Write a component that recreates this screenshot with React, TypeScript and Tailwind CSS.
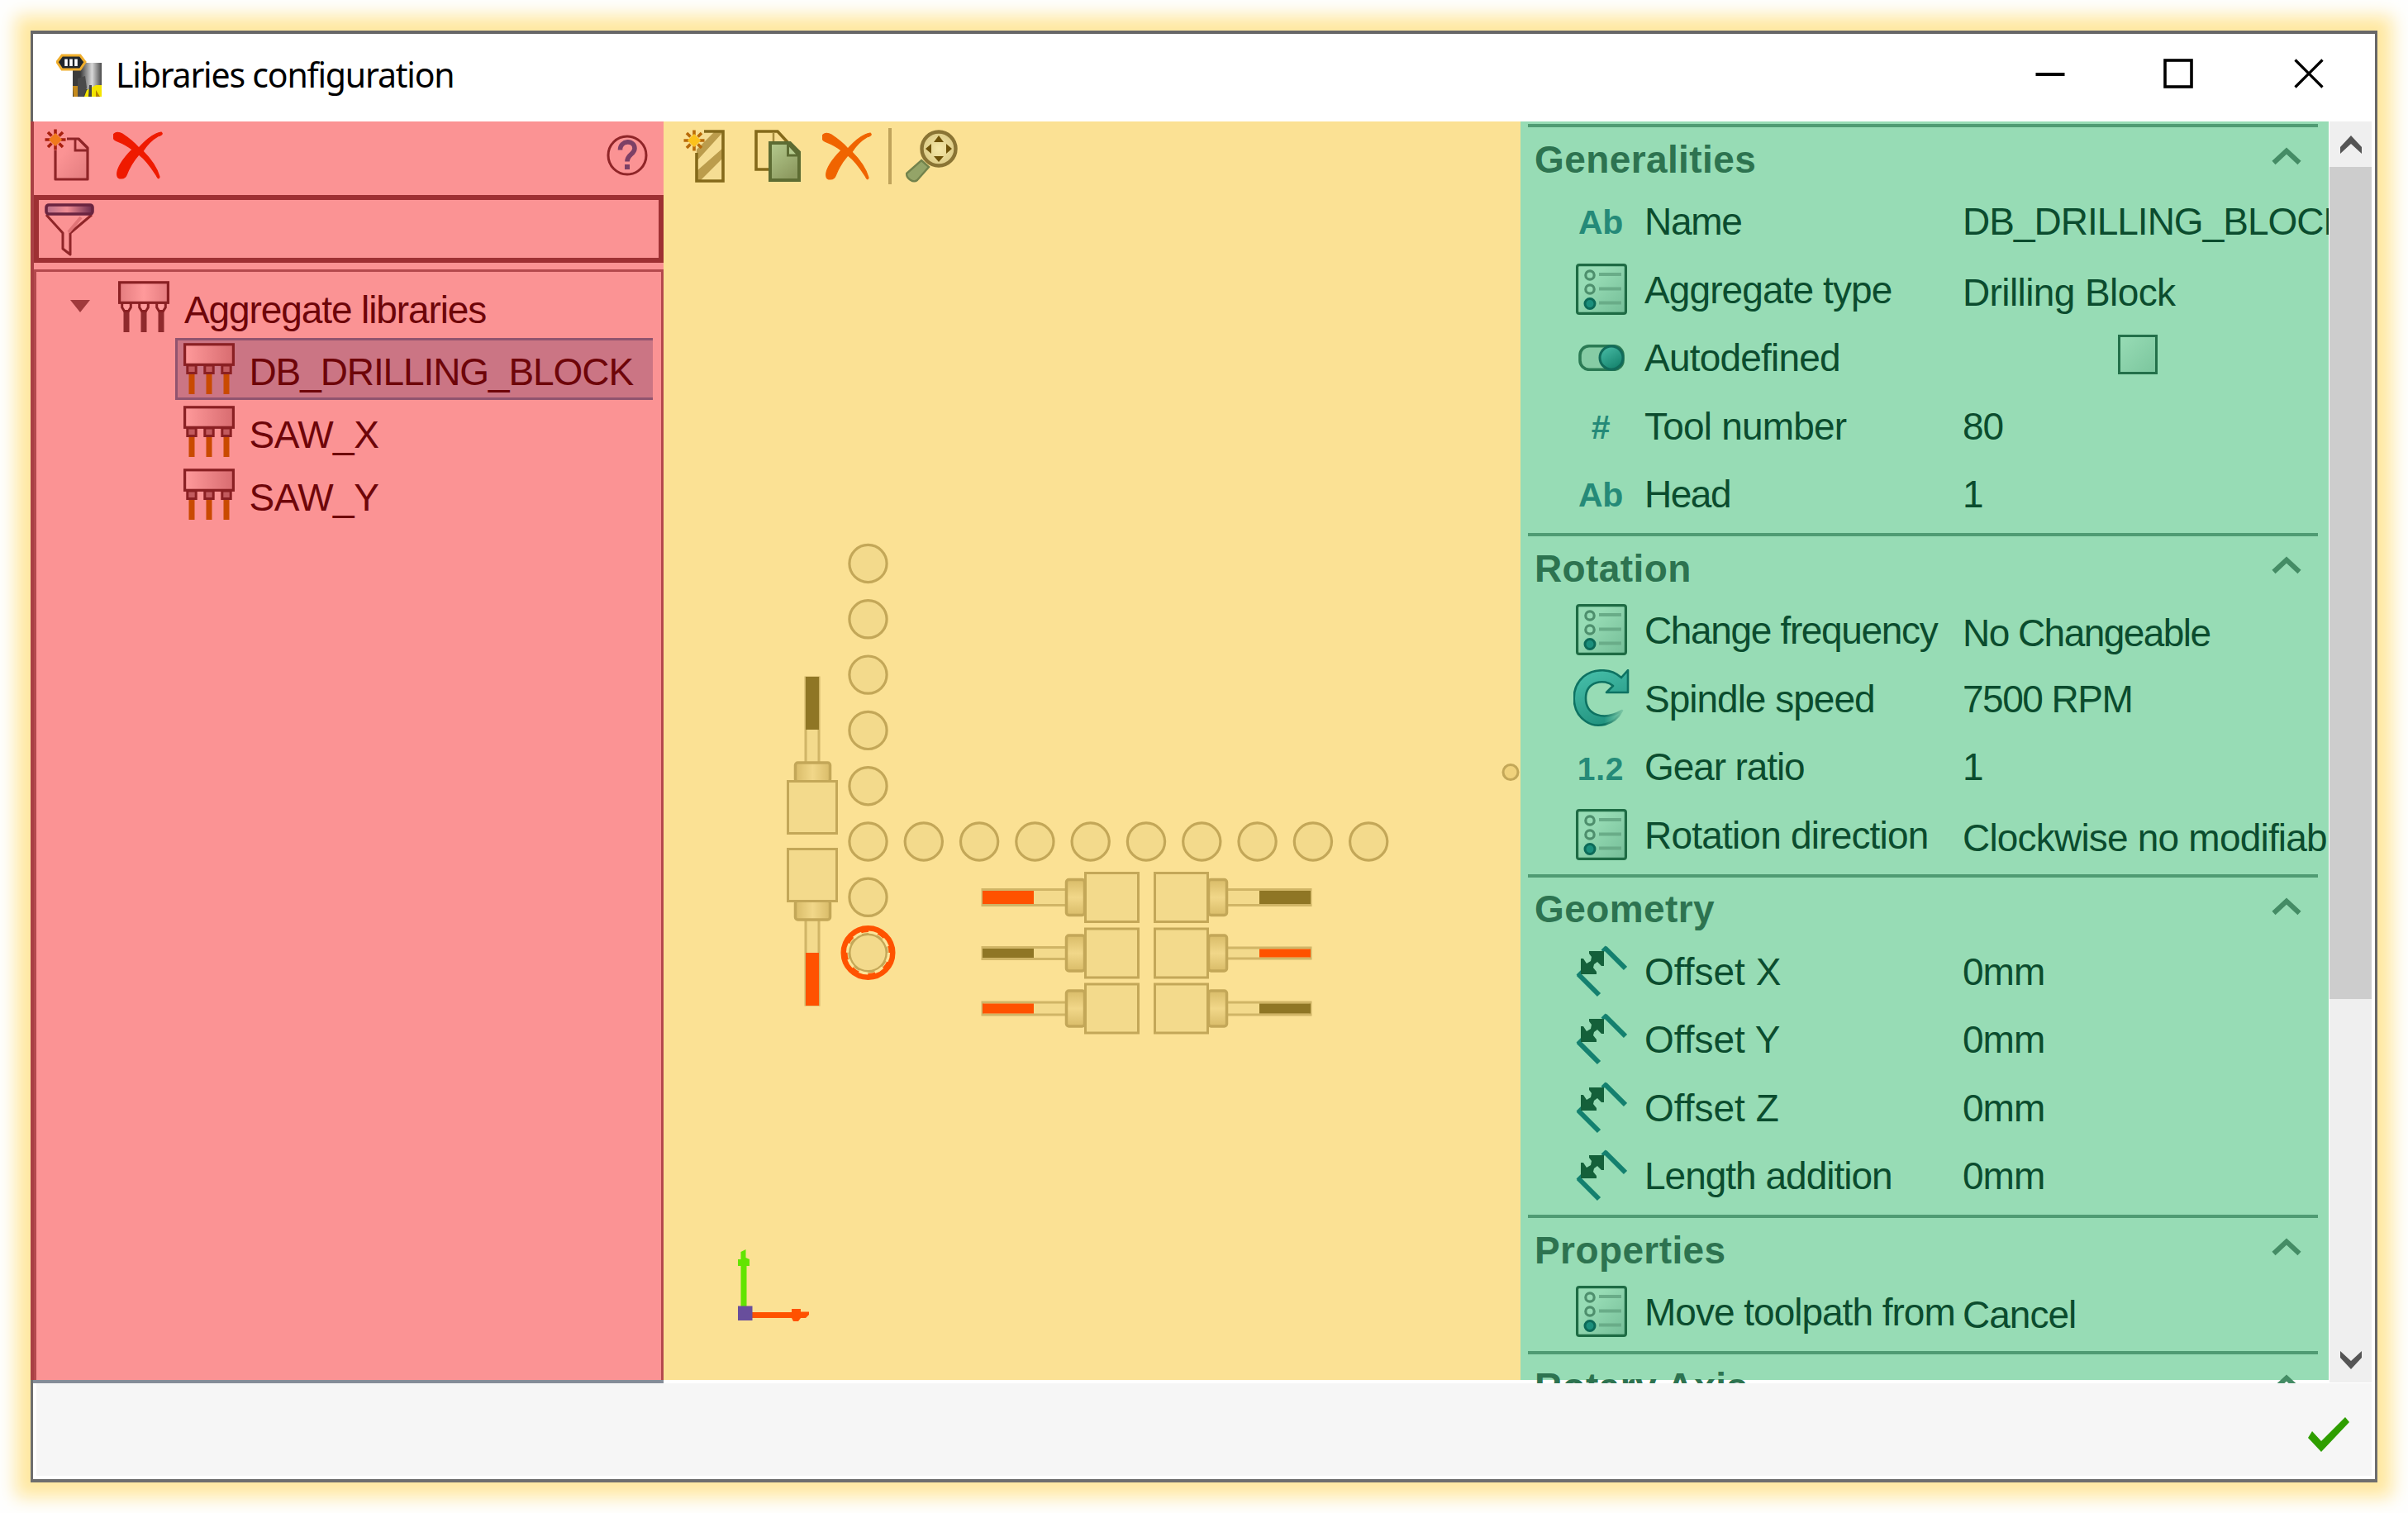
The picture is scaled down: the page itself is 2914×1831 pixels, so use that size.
import type { ReactNode } from 'react';

const agg = 'font-["Liberation_Sans",sans-serif]';

function AppIcon() {
  return (
    <svg width="56" height="54" viewBox="0 0 56 54">
      <defs>
        <linearGradient id="bit" x1="0" x2="1">
          <stop offset="0" stopColor="#3a3a3a" />
          <stop offset="0.55" stopColor="#d8d8d8" />
          <stop offset="1" stopColor="#4a4a4a" />
        </linearGradient>
      </defs>
      <rect x="20" y="16" width="18" height="36" fill="#3c3c3c" />
      <rect x="29" y="11" width="26" height="32" fill="url(#bit)" />
      <path d="M20 39h7v13h-6z" fill="#c58a1c" />
      <path d="M48 38h7v14H34l3-8z" fill="#f4e400" />
      <path d="M26 30l9-3 2 14-4 11h-7z" fill="#4a4a4a" />
      <path d="M40 38l3 0 0 14-4 0z" fill="#444" />
      <path d="M48 52l0-8 5 8z" fill="#b48300" />
      <path d="M7 2h22l6 8-6 9H7L1 10z" fill="#20262c" stroke="#efae2d" strokeWidth="3" />
      <path d="M12 6.500v8.500M18 6.500v8.500M24 6.500v8.500" stroke="#fff" strokeWidth="3.600" />
    </svg>
  );
}

function Star({ cx, cy, color, core }: { cx: number; cy: number; color: string; core: string }) {
  return (
    <g stroke={color} strokeWidth="3.600">
      <path d={`M${cx} ${cy - 12.5}v6M${cx} ${cy + 6.5}v6M${cx - 12.5} ${cy}h6M${cx + 6.5} ${cy}h6M${cx - 9} ${cy - 9}l4.500 4.500M${cx + 9} ${cy + 9}l-4.500 -4.500M${cx + 9} ${cy - 9}l-4.500 4.500M${cx - 9} ${cy + 9}l4.500 -4.500`} />
      <path d={`M${cx} ${cy - 7}l3.500 3.500 3.500 3.500-3.500 3.500-3.500 3.500-3.500-3.500-3.500-3.500 3.500-3.500z`} fill={core} stroke={core} strokeWidth="1.500" />
    </g>
  );
}

function NewFileIcon() {
  return (
    <svg width="54" height="64" viewBox="0 0 54 64">
      <defs>
        <linearGradient id="pg" x1="0" y1="0" x2="1" y2="1">
          <stop offset="0.3" stopColor="#fb9394" />
          <stop offset="1" stopColor="#e27c7e" />
        </linearGradient>
      </defs>
      <path d="M13 26v35h39V23L41 12H27" fill="url(#pg)" stroke="#8f2528" strokeWidth="3.200" strokeLinejoin="round" />
      <path d="M37 12v14h14" fill="none" stroke="#8f2528" strokeWidth="2.800" />
      <Star cx={13} cy={13} color="#a8200f" core="#f07a1c" />
    </svg>
  );
}

function CrossIcon({ color }: { color: string }) {
  return (
    <svg width="60" height="58" viewBox="0 0 60 58">
      <path d="M0 6C0 1 6 0 11 3C20 9 26 14 31 20C38 12 47 3 58 1C61 3 58 5 54 6C47 10 41 16 36 24C45 33 53 44 56 55C55 59 53 55 52 53C45 42 38 33 31 28C24 36 19 45 16 53C14 58 6 58 5 54C3 46 12 33 23 22C16 16 8 13 3 11C1 10 0 8 0 6Z" fill={color} stroke={color} strokeWidth="1.200" />
    </svg>
  );
}

function HelpIcon() {
  return (
    <svg width="50" height="50" viewBox="0 0 50 50">
      <circle cx="25" cy="25" r="23" fill="none" stroke="#8f2528" strokeWidth="3" />
      <path d="M16.500 18.500c0-12.500 17.500-12.500 17.500-2 0 7.500-9 7-9 16" fill="none" stroke="#7c4066" strokeWidth="5.600" />
      <rect x="22" y="36" width="6" height="6" fill="#7c4066" />
    </svg>
  );
}

function FunnelIcon() {
  return (
    <svg width="60" height="64" viewBox="0 0 60 64">
      <defs>
        <linearGradient id="fn" x1="0" x2="1">
          <stop offset="0" stopColor="#b8708a" />
          <stop offset="0.45" stopColor="#f08c94" />
          <stop offset="1" stopColor="#6a2a4c" />
        </linearGradient>
      </defs>
      <path d="M2 14L22 36v19l9 7V36L57 14" fill="#fb9394" stroke="#8f2528" strokeWidth="3" strokeLinejoin="round" />
      <path d="M44 17L29 35" stroke="#e07376" strokeWidth="4" />
      <rect x="2" y="2" width="56" height="11" rx="3" fill="url(#fn)" stroke="#6a2440" strokeWidth="3.600" />
    </svg>
  );
}

function BlockIcon({ root }: { root?: boolean }) {
  return (
    <svg width="62" height="62" viewBox="0 0 62 62" className="shrink-0">
      <defs>
        <linearGradient id="bk" x1="0" x2="1">
          <stop offset="0" stopColor="#ff9a9b" />
          <stop offset="1" stopColor="#d86c70" />
        </linearGradient>
        <linearGradient id="bkr" x1="0" x2="1">
          <stop offset="0" stopColor="#e47c7f" />
          <stop offset="0.5" stopColor="#ff9a9b" />
          <stop offset="1" stopColor="#e47c7f" />
        </linearGradient>
      </defs>
      {[10, 31, 52].map((x) => (
        <g key={x}>
          <rect x={x - 3.5} y="37" width="7" height="25" fill={root ? '#8f2a2d' : '#c94a00'} />
          <path
            d={root ? `M${x - 5.3} 26h10.600v6l-2.800 4.500h-5l-2.800-4.500z` : `M${x - 5.2} 27h10.400v9.500h-10.400z`}
            fill={root ? '#ff9a9b' : '#c25a5e'}
            stroke="#8a2023"
            strokeWidth="3"
          />
        </g>
      ))}
      <rect x="1.600" y="1.800" width="58.800" height="24.500" fill={root ? 'url(#bkr)' : 'url(#bk)'} stroke="#8a2023" strokeWidth="3.200" />
    </svg>
  );
}

function NewToolIcon() {
  return (
    <svg width="50" height="64" viewBox="0 0 50 64">
      <rect x="16" y="2" width="32" height="60" fill="#f5dd93" />
      <path d="M16 24L38 2h8v3L16 38zM16 50L48 22v12L20 62h-4z" fill="#bb9c4c" />
      <path d="M16 28v34h32V2H25" fill="none" stroke="#84691a" strokeWidth="3.600" />
      <Star cx={13} cy={13} color="#b86a08" core="#fcc21c" />
    </svg>
  );
}

function CopyIcon() {
  return (
    <svg width="56" height="64" viewBox="0 0 56 64">
      <defs>
        <linearGradient id="cp" x1="0" y1="0" x2="0.600" y2="1">
          <stop offset="0" stopColor="#b5cb8e" />
          <stop offset="1" stopColor="#8d9a60" />
        </linearGradient>
      </defs>
      <path d="M2 2h26l12 13v33H2z" fill="#f8dd90" stroke="#84691a" strokeWidth="3.600" />
      <path d="M23 3v13" stroke="#a78c3e" strokeWidth="2.500" />
      <path d="M19 16h24l11 11v34H19z" fill="url(#cp)" stroke="#5d6c33" strokeWidth="4" />
      <path d="M40.500 17v14h13z" fill="#b5cb8e" stroke="#5d6c33" strokeWidth="3" />
    </svg>
  );
}

function ZoomFitIcon() {
  return (
    <svg width="64" height="64" viewBox="0 0 64 64">
      <defs>
        <radialGradient id="zf">
          <stop offset="0" stopColor="#f6e8a8" />
          <stop offset="1" stopColor="#dccb86" />
        </radialGradient>
      </defs>
      <path d="M19 37l9 8L14 61c-5 4-13-2-13-8z" fill="#94a468" stroke="#72824c" strokeWidth="2.400" />
      <circle cx="40" cy="23" r="20.500" fill="url(#zf)" stroke="#8a7434" strokeWidth="4.400" />
      <path d="M40 7l6 8H34zM40 39l6-7H34zM24 23l7-6v12zM56 23l-7-6v12z" fill="#6e5208" />
    </svg>
  );
}

function ListIcon() {
  return (
    <svg width="62" height="62" viewBox="0 0 62 62" className="mt-[2px]">
      <defs>
        <linearGradient id="ls" x1="0" y1="0" x2="1" y2="1">
          <stop offset="0.300" stopColor="#97dcb5" />
          <stop offset="1" stopColor="#74bd97" />
        </linearGradient>
      </defs>
      <rect x="1.600" y="1.600" width="58.800" height="58.800" rx="2.500" fill="url(#ls)" stroke="#1e6b44" strokeWidth="3.200" />
      <path d="M28 13h27M28 30.500h27M28 47.500h27" stroke="#69ac88" strokeWidth="4" />
      <circle cx="17" cy="14" r="5.200" fill="#97dcb5" stroke="#4e8f6d" strokeWidth="3.200" />
      <circle cx="17" cy="31" r="5.200" fill="#97dcb5" stroke="#4e8f6d" strokeWidth="3.200" />
      <circle cx="17" cy="48.500" r="6" fill="#1b8f7c" stroke="#0c6a58" strokeWidth="3" />
    </svg>
  );
}

function ToggleIcon() {
  return (
    <svg width="56" height="32" viewBox="0 0 56 32" className="mt-[4px]">
      <defs>
        <linearGradient id="tg" x1="0" y1="0" x2="0.600" y2="1">
          <stop offset="0" stopColor="#4bbfa9" />
          <stop offset="1" stopColor="#17856f" />
        </linearGradient>
      </defs>
      <rect x="2" y="1.800" width="52" height="28.500" rx="11" fill="#86cca5" stroke="#2b7a54" strokeWidth="3.600" />
      <circle cx="40" cy="16" r="14" fill="url(#tg)" stroke="#116b5a" strokeWidth="3" />
    </svg>
  );
}

function RotateIcon() {
  return (
    <svg width="68" height="70" viewBox="0 0 68 70" className="mt-[2px]">
      <defs>
        <linearGradient id="rt" x1="0.300" y1="0" x2="0.700" y2="1">
          <stop offset="0" stopColor="#45bda8" />
          <stop offset="0.750" stopColor="#2a9c88" />
          <stop offset="1" stopColor="#1d8f7c" />
        </linearGradient>
        <linearGradient id="rf" x1="0" x2="1">
          <stop offset="0.550" stopColor="#fff" />
          <stop offset="0.950" stopColor="#000" />
        </linearGradient>
        <mask id="rm">
          <rect width="68" height="36" fill="#fff" />
          <rect y="36" width="68" height="34" fill="url(#rf)" />
        </mask>
      </defs>
      <path mask="url(#rm)" d="M66 1V28H40L48 20C38 11 15 14 15 35C15 55 36 63 59 50C50 68 28 72 15 63C-4 50-3 22 12 9C26-2 46-1 58 10Z" fill="url(#rt)" stroke="#0d7262" strokeWidth="2.600" strokeLinejoin="round" />
    </svg>
  );
}

function DimensionIcon() {
  return (
    <svg width="62" height="64" viewBox="0 0 62 64" className="mt-[2px]">
      <path d="M28 61L3 36M60 29L35 4" stroke="#14806f" strokeWidth="6" />
      <path d="M2 38l8-8M32 8l5-5" stroke="#14806f" strokeWidth="4" />
      <path d="M34 8v18h-3l-5-5-4 3-1 4 4 5v3H6V17h3l4 6 5-3 1-5-3-4v-3z" fill="#14603a" />
    </svg>
  );
}

function Glyph({ children, small }: { children: ReactNode; small?: boolean }) {
  return (
    <span className={(small ? 'pt-[9px] text-[39px] tracking-[0.7px] ' : 'pt-[7px] text-[41px] tracking-[-0.3px] ') + 'pr-[2px] leading-none font-bold text-[#258a78]'}>
      {children}
    </span>
  );
}

type RowData = { icon: ReactNode; label: string; value?: ReactNode; drop?: boolean; lt?: string; vt?: string };

const sections: { title: string; rows: RowData[] }[] = [
  {
    title: 'Generalities',
    rows: [
      { icon: <Glyph>Ab</Glyph>, label: 'Name', value: 'DB_DRILLING_BLOCK', lt: 'tracking-[-1.3px]', vt: 'tracking-[-1px]' },
      { icon: <ListIcon />, label: 'Aggregate type', value: 'Drilling Block', drop: true, lt: 'tracking-[-0.9px]', vt: 'tracking-[-0.6px]' },
      { icon: <ToggleIcon />, label: 'Autodefined', value: <Checkbox />, lt: 'tracking-[-0.8px]' },
      { icon: <Glyph>#</Glyph>, label: 'Tool number', value: '80', lt: 'tracking-[-0.8px]' },
      { icon: <Glyph>Ab</Glyph>, label: 'Head', value: '1', lt: 'tracking-[-1.5px]' },
    ],
  },
  {
    title: 'Rotation',
    rows: [
      { icon: <ListIcon />, label: 'Change frequency', value: 'No Changeable', drop: true, lt: 'tracking-[-1.35px]', vt: 'tracking-[-1.55px]' },
      { icon: <RotateIcon />, label: 'Spindle speed', value: '7500 RPM', vt: 'tracking-[-1.5px]' },
      { icon: <Glyph small>1.2</Glyph>, label: 'Gear ratio', value: '1', lt: 'tracking-[-1.1px]' },
      { icon: <ListIcon />, label: 'Rotation direction', value: 'Clockwise no modifiab', drop: true, lt: 'tracking-[-0.8px]', vt: 'tracking-[-0.8px]' },
    ],
  },
  {
    title: 'Geometry',
    rows: [
      { icon: <DimensionIcon />, label: 'Offset X', value: '0mm', lt: 'tracking-[0px]' },
      { icon: <DimensionIcon />, label: 'Offset Y', value: '0mm', lt: 'tracking-[0px]' },
      { icon: <DimensionIcon />, label: 'Offset Z', value: '0mm', lt: 'tracking-[0px]' },
      { icon: <DimensionIcon />, label: 'Length addition', value: '0mm' },
    ],
  },
  {
    title: 'Properties',
    rows: [{ icon: <ListIcon />, label: 'Move toolpath from', value: 'Cancel', drop: true }],
  },
  { title: 'Rotary Axis', rows: [] },
];

function Checkbox() {
  return <span className="mb-1 ml-[188px] block size-12 border-[3px] border-[#23704a] bg-linear-to-br from-[#97dcb5] to-[#7cc69e]" />;
}

function Section({ title, rows }: { title: string; rows: RowData[] }) {
  return (
    <section className="mr-[13px] ml-[9px] shrink-0 border-t-4 border-[#4f9b73] pb-[7.5px]">
      <header className="flex h-[71px] items-center justify-between pt-[5px] pr-[19px] pl-[8px]">
        <h2 className="pt-px text-[46px] leading-none font-bold tracking-[0.4px] text-[#2d7350]">{title}</h2>
        <svg width="38" height="24" viewBox="0 0 38 24" className="mb-[6px]">
          <path d="M3.500 20L19 5.500L34.500 20" fill="none" stroke="#448c65" strokeWidth="6" />
        </svg>
      </header>
      {rows.map((r) => (
        <div key={r.label} className="flex h-[82.5px] items-center">
          <span className="ml-[54px] flex w-[70px] shrink-0 items-center justify-center">{r.icon}</span>
          <span className={(r.lt ?? 'tracking-[-1px]') + ' ml-[17px] w-[385px] shrink-0 pt-[4px] text-[46px] leading-none whitespace-nowrap text-[#0b4c2e]'}>
            {r.label}
          </span>
          <span
            className={
              (r.vt ?? 'tracking-[-1px]') +
              (typeof r.value !== 'string' ? '' : r.drop ? ' pt-[10px]' : ' pt-[4px]') +
              ' text-[46px] leading-none whitespace-nowrap text-[#0b4c2e]'
            }
          >
            {r.value}
          </span>
        </div>
      ))}
    </section>
  );
}

const edge = '#c3a758';
const face = '#f3da8c';

/* A spindle drawn pointing left from its box; `flip` mirrors it. */
function SideTool({ x, y, flip, hot, half }: { x: number; y: number; flip?: boolean; hot: boolean; half: number }) {
  return (
    <g transform={`translate(${x} ${y})${flip ? ' scale(-1 1)' : ''}`} stroke={edge} strokeWidth="3">
      <rect x="-190" y={-half - 1.5} width="104" height={half * 2 + 3} fill={face} strokeOpacity="0.75" />
      <rect x="-190" y={-half} width="62" height={half * 2} fill={hot ? '#ff5200' : '#8f7625'} stroke="none" />
      <rect x="-88.500" y="-21.500" width="22" height="43" rx="3" fill="url(#collar)" strokeWidth="3.500" />
      <rect x="-65.500" y="-29.500" width="64" height="59" fill={face} />
    </g>
  );
}

function UprightTool({ y, flip, hot }: { y: number; flip?: boolean; hot: boolean }) {
  return (
    <g transform={`translate(983 ${y})${flip ? ' scale(1 -1)' : ''}`} stroke={edge} strokeWidth="3">
      <rect x="-8" y="-190" width="16" height="104" fill={face} strokeOpacity="0.75" />
      <rect x="-8" y="-191" width="16" height="64" fill={hot ? '#ff5200' : '#8f7625'} stroke="none" />
      <rect x="-20.500" y="-87" width="42" height="23" rx="3" fill="url(#collarUp)" strokeWidth="3.500" />
      <rect x="-29.500" y="-64.500" width="59" height="63" fill={face} />
    </g>
  );
}

function Canvas() {
  return (
    <svg width="1037" height="1420" viewBox="803 250 1037 1420" className="block">
      <defs>
        <linearGradient id="collar" x1="0" y1="0" x2="0" y2="1">
          <stop offset="0" stopColor="#d9bc69" />
          <stop offset="0.500" stopColor="#f1d789" />
          <stop offset="1" stopColor="#d9bc69" />
        </linearGradient>
        <linearGradient id="collarUp" x1="0" x2="1">
          <stop offset="0" stopColor="#d9bc69" />
          <stop offset="0.500" stopColor="#f1d789" />
          <stop offset="1" stopColor="#d9bc69" />
        </linearGradient>
      </defs>
      {[0, 1, 2, 3, 4, 5, 6, 7].map((i) => (
        <circle key={i} cx="1050.500" cy={682 + i * 67.3} r="22.600" fill={face} stroke={edge} strokeWidth="3.200" />
      ))}
      {[1, 2, 3, 4, 5, 6, 7, 8, 9].map((i) => (
        <circle key={i} cx={1050.5 + i * 67.3} cy="1018.500" r="22.600" fill={face} stroke={edge} strokeWidth="3.200" />
      ))}
      <circle cx="1050.500" cy="1153" r="29" fill="none" stroke="#ff5200" strokeWidth="8" />
      <circle cx="1050.500" cy="1153" r="25" fill="none" stroke="#fce59a" strokeWidth="3.200" strokeDasharray="11 8.600" />
      <circle cx="1828" cy="934.500" r="9" fill="#f0d27c" stroke={edge} strokeWidth="3" />
      <UprightTool y={1010} hot={false} />
      <UprightTool y={1026} flip hot />
      <SideTool x={1379} y={1086} hot half={8} />
      <SideTool x={1379} y={1153.5} hot={false} half={5.5} />
      <SideTool x={1379} y={1220.5} hot half={6} />
      <SideTool x={1396} y={1086} flip hot={false} half={8} />
      <SideTool x={1396} y={1153.5} flip hot half={5} />
      <SideTool x={1396} y={1220.5} flip hot={false} half={6} />
      <path d="M896.500 1582v-50h-3.500v-8h3.500v-9l6-3v10l4.500 2v8h-3.500v50z" fill="#62e400" />
      <path d="M910 1588h48v-4h11v3.500h10v3.500l-4 4h-6l-3 4h-6l-2-4h-48z" fill="#ff5200" />
      <rect x="893" y="1580.500" width="17.500" height="17.500" fill="#684e9c" />
    </svg>
  );
}

function TreeItem({ name, selected }: { name: string; selected?: boolean }) {
  return (
    <div
      className={
        'mr-[10px] ml-[168px] flex h-[75.6px] shrink-0 items-center border-[3px] border-r-0 pl-[7px] ' +
        (selected ? 'border-[#91546f] bg-[#cb7584]' : 'border-transparent')
      }
    >
      <BlockIcon />
      <span className={(selected ? 'tracking-[-1.1px]' : 'tracking-[-0.5px]') + ' ml-[17.5px] pt-2 text-[46px] leading-none whitespace-nowrap text-[#6e0509]'}>
        {name}
      </span>
    </div>
  );
}

export default function App() {
  return (
    <div className={'h-[1831px] w-[2914px] overflow-hidden bg-[#fefefe] p-[37px] ' + agg}>
      <div className="flex h-[1757px] w-[2840px] flex-col bg-white shadow-[0_0_20px_18px_#ffe8a0]">
        <div className="flex h-[110px] shrink-0 items-center border-x-[3px] border-t-4 border-[#676767] pl-[28px]">
          <div className="mb-[5px]">
            <AppIcon />
          </div>
          <h1 className='mb-[7px] ml-[16px] font-["Noto_Sans","Open_Sans",sans-serif] text-[41px] leading-none tracking-[-1.2px] whitespace-nowrap text-black'>
            Libraries configuration
          </h1>
          <div className="mb-[10px] ml-auto flex items-center pr-[62px]">
            <svg width="36" height="36" viewBox="0 0 36 36">
              <path d="M0.500 19h35" stroke="#000" strokeWidth="4" />
            </svg>
            <svg width="36" height="36" viewBox="0 0 36 36" className="ml-[119px]">
              <rect x="2" y="2" width="32" height="32" fill="none" stroke="#000" strokeWidth="3.600" />
            </svg>
            <svg width="36" height="36" viewBox="0 0 36 36" className="ml-[122px]">
              <path d="M1.500 1.500l33 33M34.500 1.500l-33 33" stroke="#000" strokeWidth="3.200" />
            </svg>
          </div>
        </div>

        <div className="flex h-[1523px] shrink-0">
          <aside className="flex w-[766px] shrink-0 flex-col border-l-4 border-[#a94044] bg-[#fb9394]">
            <div className="flex h-[89px] shrink-0 items-center px-[13px] pb-[7px]">
              <NewFileIcon />
              <div className="ml-[29px]">
                <CrossIcon color="#ef1a00" />
              </div>
              <div className="mr-[6px] ml-auto">
                <HelpIcon />
              </div>
            </div>
            <div className="flex h-[82px] shrink-0 items-center border-[6px] border-[#9e3033] pt-[2px] pl-[7px]">
              <FunnelIcon />
            </div>
            <div className="mt-[8px] flex flex-1 flex-col border-t-[3px] border-r-[3px] border-l-[3px] border-[#b4494d] pt-[4px]">
              <div className="flex h-[75.6px] shrink-0 items-center pl-[41px]">
                <svg width="24" height="15" viewBox="0 0 24 15">
                  <path d="M0 0h24L12 15z" fill="#a03a3c" />
                </svg>
                <div className="ml-[34px]">
                  <BlockIcon root />
                </div>
                <span className="ml-[18px] pt-2 text-[46px] leading-none tracking-[-1.1px] whitespace-nowrap text-[#6e0509]">Aggregate libraries</span>
              </div>
              <TreeItem name="DB_DRILLING_BLOCK" selected />
              <TreeItem name="SAW_X" />
              <TreeItem name="SAW_Y" />
            </div>
          </aside>

          <main className="flex w-[1037px] shrink-0 flex-col bg-[#fbe194]">
            <div className="flex h-[103px] shrink-0 items-center pb-[20px] pl-[24px]">
              <NewToolIcon />
              <div className="ml-[36px]">
                <CopyIcon />
              </div>
              <div className="ml-[26px]">
                <CrossIcon color="#f06400" />
              </div>
              <div className="ml-[20px] h-[68px] w-[4px] bg-[#bfa35b]" />
              <div className="ml-[17px]">
                <ZoomFitIcon />
              </div>
            </div>
            <Canvas />
          </main>

          <div className="h-[1527px] w-[978px] shrink-0 overflow-hidden">
            <div className="flex h-[1523px] flex-col bg-[#97dcb5] pt-[3px]">
              {sections.map((s) => (
                <Section key={s.title} title={s.title} rows={s.rows} />
              ))}
            </div>
          </div>

          <div className="flex flex-1 border-r-[3px] border-[#676767] pl-[1px]">
            <div className="flex h-[1526px] w-[51px] flex-col items-center bg-[#efefef]">
              <div className="flex h-[55px] shrink-0 items-center">
                <svg width="26" height="24" viewBox="0 0 26 24">
                  <path d="M0 15L13 1L26 15V23L13 11L0 23Z" fill="#555" />
                </svg>
              </div>
              <div className="h-[1007px] w-full bg-[#cdcdcd]" />
              <svg width="26" height="24" viewBox="0 0 26 24" className="mt-auto mb-[15px]">
                <path d="M0 9L13 23L26 9V1L13 13L0 1Z" fill="#555" />
              </svg>
            </div>
          </div>
        </div>

        <footer className="flex flex-1 flex-col border-x-[3px] border-b-4 border-[#6e6e6e]">
          <div className="h-1 w-[763px] shrink-0 bg-[#858c98]" />
          <div className="mx-[4px] mb-[4px] flex flex-1 items-center justify-end bg-[#f6f6f6] pt-[12px] pr-[26px]">
            <svg width="52" height="44" viewBox="0 0 52 44">
              <path d="M1 26L6 18L17 30L46 1L51 7L17 43Z" fill="#2f9e00" />
            </svg>
          </div>
        </footer>
      </div>
    </div>
  );
}
